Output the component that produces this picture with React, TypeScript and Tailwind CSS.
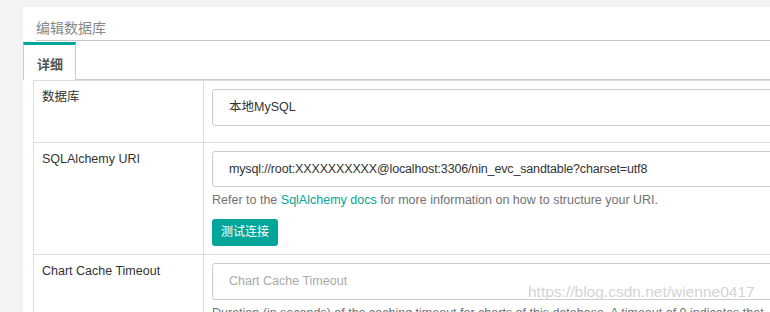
import React from 'react';

const font = { fontFamily: '"Liberation Sans", "Noto Sans CJK SC", sans-serif' };

export default function App() {
  return (
    <div className="w-[770px] h-[312px] overflow-hidden bg-[#f3f3f3] pt-[7px] pl-[23px] relative" style={font}>
      <div className="w-[1000px] h-[400px] bg-white">
        {/* header */}
        <div className="ml-[13px] pt-[13px] h-[34px] border-b border-[#c8c8c8] text-[14px] leading-[16px] text-[#888]">
          编辑数据库
        </div>

        {/* tabs */}
        <div className="flex mt-px border-b border-[#ccc]">
          <div className="w-[53px] h-[38px] -mb-px bg-white border-l border-r border-[#ccc] border-t-[3px] border-t-[#00a699] pl-[13px] pt-[10px] text-[13px] font-bold text-[#555]">
            详细
          </div>
        </div>

        {/* table */}
        <div className="ml-[10px] border border-[#ddd] text-[12.5px] text-[#333]">
          <div className="flex border-b border-[#ddd] h-[62px]">
            <div className="w-[170px] shrink-0 border-r border-[#ddd] px-2 pt-[7px] leading-[18px]">数据库</div>
            <div className="flex-1 p-2">
              <div className="h-[37px] border border-[#ccc] rounded-[3px] pl-4 flex items-center">本地MySQL</div>
            </div>
          </div>

          <div className="flex border-b border-[#ddd] h-[112px]">
            <div className="w-[170px] shrink-0 border-r border-[#ddd] px-2 pt-[7px] leading-[18px]">SQLAlchemy URI</div>
            <div className="flex-1 p-2 flex flex-col items-start">
              <div className="w-full h-[37px] border border-[#ccc] rounded-[3px] pl-4 flex items-center tracking-[-0.15px]">
                mysql://root:XXXXXXXXXX@localhost:3306/nin_evc_sandtable?charset=utf8
              </div>
              <p className="mt-[4px] leading-[18px] text-[#737373]">
                Refer to the <span className="text-[#00a699]">SqlAlchemy docs</span> for more information on how to structure your URI.
              </p>
              <button className="mt-[10px] h-[28px] px-[9px] rounded-[3px] bg-[#00a699] text-white text-[12px]">测试连接</button>
            </div>
          </div>

          <div className="flex h-[80px]">
            <div className="w-[170px] shrink-0 border-r border-[#ddd] px-2 pt-[7px] leading-[18px]">Chart Cache Timeout</div>
            <div className="flex-1 p-2">
              <div className="h-[37px] border border-[#ccc] rounded-[3px] pl-4 flex items-center text-[#aaa]">Chart Cache Timeout</div>
              <p className="mt-[4px] leading-[18px] text-[#737373] whitespace-nowrap">
                Duration (in seconds) of the caching timeout for charts of this database. A timeout of 0 indicates that
              </p>
            </div>
          </div>
        </div>
      </div>

      {/* watermark */}
      <div className="absolute left-[528px] top-[283px] text-[15.5px] leading-[18px] text-[#d4d4d4]">
        https://blog.csdn.net/wienne0417
      </div>
    </div>
  );
}
